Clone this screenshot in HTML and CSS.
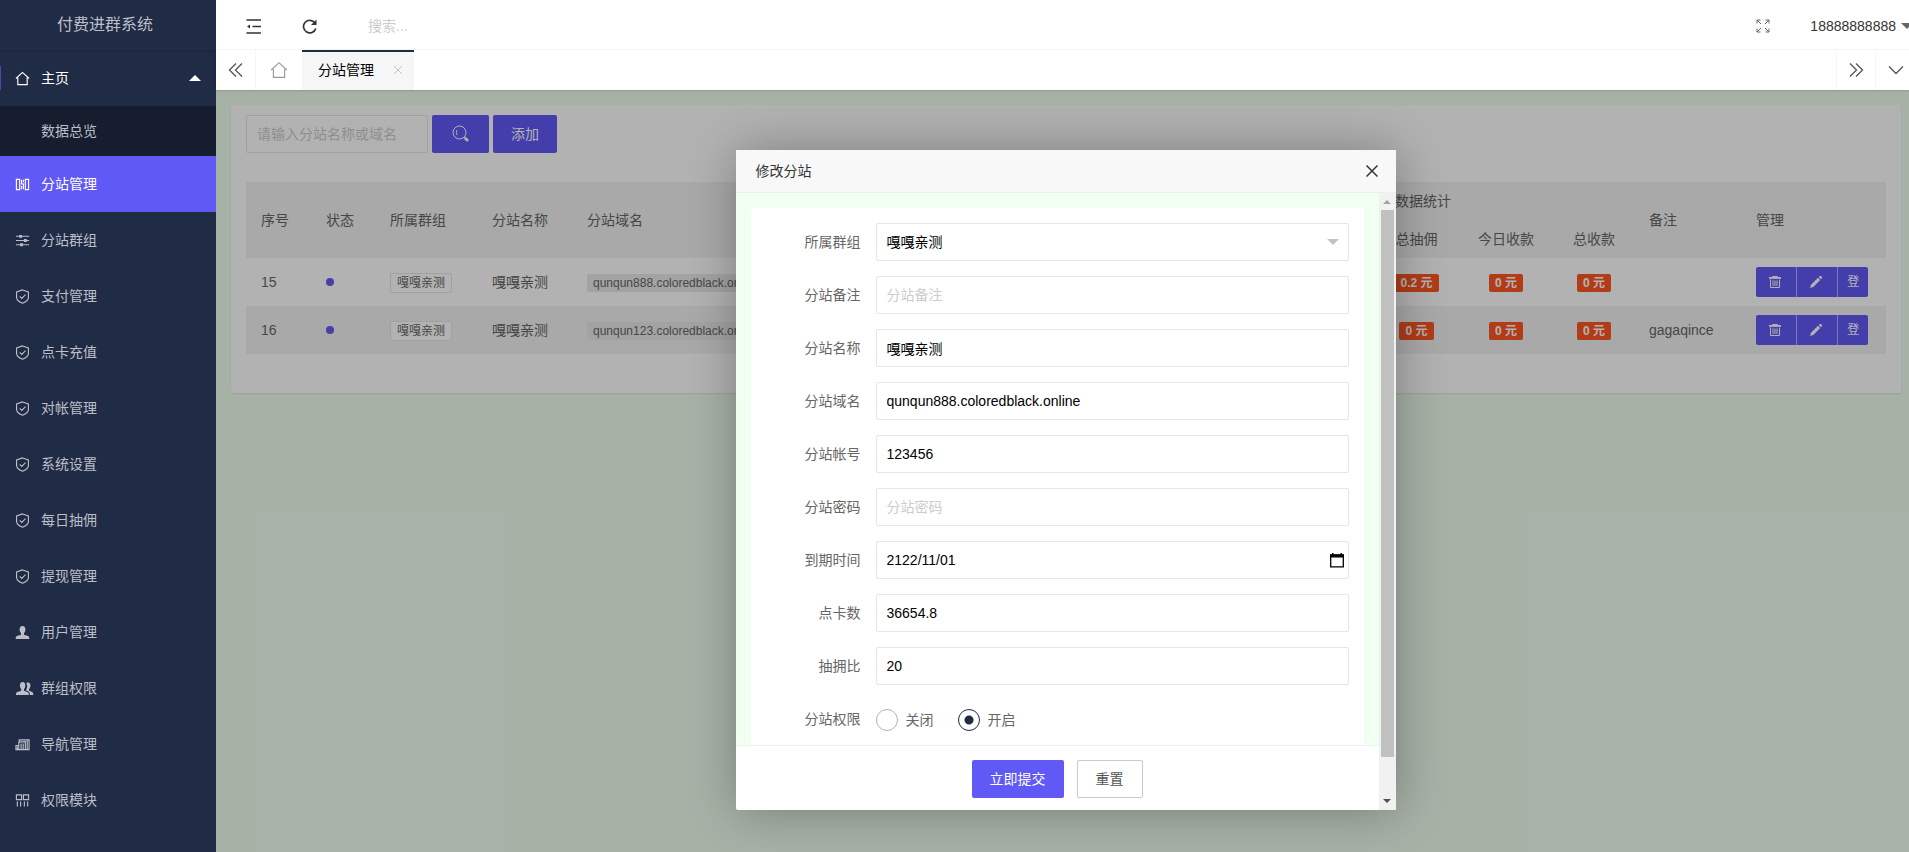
FILE: index.html
```html
<!DOCTYPE html>
<html lang="zh-CN">
<head>
<meta charset="utf-8">
<title>付费进群系统</title>
<link rel="stylesheet" href="styles.css">
</head>
<body>
<svg class="defs" aria-hidden="true">
  <symbol id="i-home" viewBox="0 0 16 16"><path d="M1 8 8 1.500 15 8M3 7v7.500h10V7" /></symbol>
  <symbol id="i-shield" viewBox="0 0 16 16"><path d="M8 1 14.300 3.200v6c0 2.600-3 4.500-6.300 6C4.700 13.700 1.700 11.800 1.700 9.200v-6zM5 7.800l2.300 2.200L11.200 6" /></symbol>
  <symbol id="i-trash" viewBox="0 0 14 14"><path d="M1 3h12M4.500 2.500v-1h5v1M2.500 4.500v8h9v-8M5 5.500V11M7 5.500V11M9 5.500V11" /><path class="solid" d="M1 2h12v1.700H1z" /></symbol>
  <symbol id="i-edit" viewBox="0 0 14 14"><path class="solid" d="M1 13l1-3.300L9 2.700 11.300 5 4.300 12zM9.800 2l1-.9q.6-.5 1.100 0l1 1q.5.6 0 1.100l-.9 1z" /></symbol>
</svg>
<div class="app">
  <aside class="side">
    <h1 class="logo">付费进群系统</h1>
    <nav>
      <a class="nav open" href="#"><svg class="icon"><use href="#i-home"/></svg><span>主页</span><i class="caret up"></i></a>
      <a class="nav sub" href="#">数据总览</a>
      <a class="nav active" href="#"><svg class="icon" viewBox="0 0 16 16"><path d="M1.500 2.500H5v11H1.500zM11 2.500h3.500v11H11zM7 3v4.500h2V13M7 9.500V13M9 3v2.500"/></svg><span>分站管理</span></a>
      <a class="nav" href="#"><svg class="icon" viewBox="0 0 16 16"><path d="M1 3.500h14M1 8h14M1 12.500h14"/><path d="M6 2v3M11 6.500v3M7 11v3" stroke-width="3"/></svg><span>分站群组</span></a>
      <a class="nav" href="#"><svg class="icon"><use href="#i-shield"/></svg><span>支付管理</span></a>
      <a class="nav" href="#"><svg class="icon"><use href="#i-shield"/></svg><span>点卡充值</span></a>
      <a class="nav" href="#"><svg class="icon"><use href="#i-shield"/></svg><span>对帐管理</span></a>
      <a class="nav" href="#"><svg class="icon"><use href="#i-shield"/></svg><span>系统设置</span></a>
      <a class="nav" href="#"><svg class="icon"><use href="#i-shield"/></svg><span>每日抽佣</span></a>
      <a class="nav" href="#"><svg class="icon"><use href="#i-shield"/></svg><span>提现管理</span></a>
      <a class="nav" href="#"><svg class="icon" viewBox="0 0 16 16"><path class="solid" d="M8 1c2 0 3.100 1.500 3.100 3.700 0 1.800-.8 3-1.500 3.800v2l4.300 1.300c.9.400 1.400 1.200 1.400 3.200H.7c0-2 .5-2.800 1.400-3.200l4.300-1.300v-2C5.700 7.700 4.900 6.500 4.900 4.700 4.900 2.500 6 1 8 1z"/></svg><span>用户管理</span></a>
      <a class="nav" href="#"><svg class="icon wide" viewBox="0 0 20 16"><path class="solid" d="M8 1c1.900 0 2.900 1.500 2.900 3.700 0 1.800-.8 3-1.400 3.800v2l3.700 1.300c.9.400 1.400 1.200 1.400 3.200H.9c0-2 .5-2.800 1.400-3.200l4.200-1.300v-2C5.800 7.700 5.100 6.500 5.100 4.700 5.100 2.500 6.100 1 8 1zM12 2c2.800-1.500 4.700.5 4.300 3.200-.2 1.500-.8 2.500-1.400 3.300v1.900l2.800 1.100c1.200.5 1.700 1.500 1.700 3.500h-3.700c0-2.500-.7-3.400-1.900-4l-2-1V9c1.200-1.700 1.500-4.300.2-7z"/></svg><span>群组权限</span></a>
      <a class="nav" href="#"><svg class="icon" viewBox="0 0 16 16"><path d="M4.500 5V3H15v10.500h-3.500M4 5.500 11 5v8.500H4zM4 9H1v4.500h3M2.500 10v3M6.500 7v6M8.700 7v6M13 3v10"/></svg><span>导航管理</span></a>
      <a class="nav" href="#"><svg class="icon" viewBox="0 0 16 16"><path d="M1.500 2H7v5H1.500zM9 2h5.500v5H9zM2.500 9v5.500M6 9v5.500M10 9v5.500M13.500 9v5.500"/></svg><span>权限模块</span></a>
    </nav>
  </aside>
  <div class="main">
    <header class="top">
      <button class="tool" aria-label="收起菜单"><svg class="ico16" viewBox="0 0 16 16"><path d="M.5 2H15M6.500 8.500H15M.5 15H15" stroke-width="1.500"/><path class="solid" d="M1 8.500 4 6.500v4z"/></svg></button>
      <button class="tool" aria-label="刷新"><svg class="ico16" viewBox="0 0 16 16"><path d="M13.800 10.500A6.300 6.300 0 1 1 13 5" stroke-width="1.700"/><path class="solid" d="M14.500 1.500V7H9z"/></svg></button>
      <input class="search" type="text" placeholder="搜索..." aria-label="搜索">
      <button class="tool full" aria-label="全屏"><svg class="ico14" viewBox="0 0 14 14"><path d="M1 4.500V1h3.500M1 1l4 4M9.500 1H13v3.500M13 1 9 5M1 9.500V13h3.500M1 13l4-4M9.500 13H13V9.500M13 13 9 9"/></svg></button>
      <a class="user" href="#">18888888888<i class="caret down"></i></a>
    </header>
    <div class="tabs">
      <button class="tab-ctl" aria-label="向左"><svg class="ico16" viewBox="0 0 16 16"><path d="M8 1.500 1.500 8 8 14.500M14 1.500 7.500 8l6.500 6.500"/></svg></button>
      <a class="tab-home" href="#" aria-label="主页"><svg class="ico18"><use href="#i-home"/></svg></a>
      <a class="tab" href="#">分站管理<svg class="ico10" viewBox="0 0 10 10"><path d="m1 1 8 8M9 1 1 9"/></svg></a>
      <button class="tab-ctl right" aria-label="向右"><svg class="ico16" viewBox="0 0 16 16"><path d="M2 1.500 8.500 8 2 14.500M8 1.500 14.500 8 8 14.500"/></svg></button>
      <button class="tab-ctl menu" aria-label="更多"><svg class="ico16" viewBox="0 0 16 16"><path d="m1 4.500 7 7 7-7"/></svg></button>
    </div>
    <main class="page">
      <section class="card">
        <form class="filter">
          <input class="field" type="text" placeholder="请输入分站名称或域名" aria-label="分站名称或域名">
          <button class="btn find" type="button" aria-label="查询"><svg class="ico18" viewBox="0 0 18 18"><circle cx="7.500" cy="7.500" r="6.500"/><path d="M5 5Q3.500 7.500 5 10"/><path d="m12.500 12.500 3.500 3.500" stroke-width="2.500"/></svg></button>
          <button class="btn" type="button">添加</button>
        </form>
        <table class="list">
          <colgroup><col class="w65"><col class="w64"><col class="w102"><col class="w95"><col><col class="w163"><col class="w83"><col class="w96"><col class="w80"><col class="w107"><col class="w145"></colgroup>
          <thead>
            <tr><th rowspan="2">序号</th><th rowspan="2">状态</th><th rowspan="2">所属群组</th><th rowspan="2">分站名称</th><th rowspan="2">分站域名</th><th class="mid" colspan="4">数据统计</th><th rowspan="2">备注</th><th rowspan="2">管理</th></tr>
            <tr><th></th><th class="mid">总抽佣</th><th class="mid">今日收款</th><th class="mid">总收款</th></tr>
          </thead>
          <tbody>
            <tr><td>15</td><td><i class="dot"></i></td><td><span class="tag rim">嘎嘎亲测</span></td><td>嘎嘎亲测</td><td><span class="tag gray">qunqun888.coloredblack.online</span></td><td></td><td class="mid"><span class="tag red">0.2 元</span></td><td class="mid"><span class="tag red">0 元</span></td><td class="mid"><span class="tag red">0 元</span></td><td></td>
              <td><div class="acts"><button aria-label="删除"><svg class="ico14"><use href="#i-trash"/></svg></button><button aria-label="编辑"><svg class="ico14"><use href="#i-edit"/></svg></button><button>登</button></div></td></tr>
            <tr><td>16</td><td><i class="dot"></i></td><td><span class="tag rim">嘎嘎亲测</span></td><td>嘎嘎亲测</td><td><span class="tag gray">qunqun123.coloredblack.online</span></td><td></td><td class="mid"><span class="tag red">0 元</span></td><td class="mid"><span class="tag red">0 元</span></td><td class="mid"><span class="tag red">0 元</span></td><td>gagaqince</td>
              <td><div class="acts"><button aria-label="删除"><svg class="ico14"><use href="#i-trash"/></svg></button><button aria-label="编辑"><svg class="ico14"><use href="#i-edit"/></svg></button><button>登</button></div></td></tr>
          </tbody>
        </table>
      </section>
      <div class="shade">
        <div class="dialog" role="dialog" aria-labelledby="dlg-title">
          <div class="dlg-head"><h2 id="dlg-title">修改分站</h2><button aria-label="关闭窗口"><svg class="ico12" viewBox="0 0 12 12"><path d="m.5.5 11 11M11.500.5l-11 11"/></svg></button></div>
          <div class="dlg-body">
            <form class="dlg-main">
              <div class="scroll">
                <div class="form">
                  <div class="row"><label for="f1">所属群组</label><div class="pick"><select id="f1" class="field"><option>嘎嘎亲测</option></select></div></div>
                  <div class="row"><label for="f2">分站备注</label><input id="f2" class="field" type="text" placeholder="分站备注"></div>
                  <div class="row"><label for="f3">分站名称</label><input id="f3" class="field" type="text" value="嘎嘎亲测"></div>
                  <div class="row"><label for="f4">分站域名</label><input id="f4" class="field" type="text" value="qunqun888.coloredblack.online"></div>
                  <div class="row"><label for="f5">分站帐号</label><input id="f5" class="field" type="text" value="123456"></div>
                  <div class="row"><label for="f6">分站密码</label><input id="f6" class="field" type="password" placeholder="分站密码"></div>
                  <div class="row"><label for="f7">到期时间</label><div class="date"><input id="f7" class="field" type="text" value="2122/11/01"><svg class="ico16" viewBox="0 0 16 16"><path d="M1.700 3h12.600v11.800H1.700z" stroke-width="1.300"/><path class="solid" d="M1 2.500h14v3H1zM3 1h1.500v2H3zM11.500 1H13v2h-1.500z"/></svg></div></div>
                  <div class="row"><label for="f8">点卡数</label><input id="f8" class="field" type="text" value="36654.8"></div>
                  <div class="row"><label for="f9">抽拥比</label><input id="f9" class="field" type="text" value="20"></div>
                  <div class="row"><span class="cap">分站权限</span><div class="radios"><label><input type="radio" name="auth">关闭</label><label><input type="radio" name="auth" checked>开启</label></div></div>
                </div>
              </div>
              <div class="dlg-foot"><button class="btn" type="button">立即提交</button><button class="btn plain" type="reset">重置</button></div>
            </form>
            <div class="bar" aria-hidden="true"><i class="arrow top-arrow"></i><div class="thumb"></div><i class="arrow end-arrow"></i></div>
          </div>
        </div>
      </div>
    </main>
  </div>
</div>
</body>
</html>
```
FILE: styles.css
```css
* { box-sizing: border-box; }
body { margin: 0; overflow: hidden; font: 14px/24px "Liberation Sans", "Noto Sans CJK SC", sans-serif; color: #666; }
a { color: inherit; text-decoration: none; }
button, input, select { font: inherit; margin: 0; }
button { border: 0; background: none; padding: 0; color: inherit; cursor: pointer; }
svg { fill: none; stroke: currentColor; stroke-width: 1; flex: none; display: block; }
.defs { position: absolute; width: 0; height: 0; }
.solid { fill: currentColor; stroke: none; }
.ico10 { width: 10px; height: 10px; }
.ico12 { width: 12px; height: 12px; }
.ico14 { width: 14px; height: 14px; }
.ico16 { width: 16px; height: 16px; }
.ico18 { width: 18px; height: 18px; }

.app { display: flex; height: 100vh; }
.side { flex: none; width: 216px; background: #202b46; color: #bcbfc7; overflow: hidden; }
.logo { margin: 0; height: 50px; line-height: 50px; padding-right: 6px; font-size: 16px; font-weight: 400; text-align: center; box-shadow: 0 1px 2px rgba(0, 0, 0, .15); }
.nav { display: flex; align-items: center; height: 56px; padding: 0 15px; }
.nav .icon { width: 15px; height: 15px; margin-right: 11px; stroke-width: 1.2; }
.nav .icon.wide { width: 19px; margin-right: 7px; }
.nav.open { color: #fff; background: linear-gradient(#4b48ab, #4b48ab) 0 center / 1px 24px no-repeat; }
.nav.open .caret { margin-left: auto; }
.nav.sub { height: 50px; padding-left: 41px; background: #161d2f; }
.nav.active { background: #6059f6; color: #fff; }
.caret { flex: none; border: 6px solid transparent; }
.caret.up { border-top: 0; border-bottom-color: #fff; }
.caret.down { border-bottom: 0; border-top-color: #666; }

.main { flex: 1; min-width: 0; display: flex; flex-direction: column; }
.top { display: flex; align-items: center; height: 50px; border-bottom: 1px solid #f6f6f6; color: #333; padding: 2px 0 0 30px; overflow: hidden; }
.tool { width: 16px; height: 16px; margin-right: 40px; }
.search { flex: 1; border: 0; outline: 0; padding: 0 10px; min-width: 0; }
.search::placeholder { color: #ccc; opacity: 1; }
.tool.full { width: 14px; height: 14px; color: #666; }
.user { display: flex; align-items: center; gap: 5px; margin-right: -4px; }
.tabs { position: relative; z-index: 1; display: flex; height: 40px; background: #fff; color: #555; box-shadow: 0 1px 2px rgba(0, 0, 0, .15); }
.tab-ctl { display: grid; place-items: center; width: 40px; border-right: 1px solid #f6f6f6; }
.tab-ctl svg { stroke-width: 1.3; }
.tab-ctl.right { margin-left: auto; border-left: 1px solid #f6f6f6; }
.tab-ctl.menu { width: 33px; padding-left: 6px; border: 0; }
.tab-home { display: grid; place-items: center; width: 46px; color: #999; }
.tab { display: flex; align-items: center; justify-content: space-between; width: 112px; padding: 0 11px 2px 16px; border-top: 2px solid #202b46; background: #f6f6f6; color: #000; }
.tab svg { color: #c2c2c2; }

.page { position: relative; flex: 1; min-height: 0; padding: 15px 8px 15px 15px; background: #f0fff0; }
.card { padding: 10px 15px 39px; border-radius: 2px; background: #fff; box-shadow: 0 1px 2px rgba(0, 0, 0, .1); }
.filter { display: flex; gap: 4px; margin-bottom: 29px; }
.field { display: block; width: 100%; height: 38px; padding: 0 10px; border: 1px solid #e6e6e6; border-radius: 2px; background: #fff; color: #000; outline: 0; }
.filter .field { width: 182px; }
.field::placeholder { color: #ccc; opacity: 1; }
.btn { display: inline-flex; align-items: center; justify-content: center; height: 38px; padding: 0 18px; border-radius: 2px; background: #6059f6; color: #fff; }
.find { width: 57px; }
.btn.plain { border: 1px solid #c9c9c9; background: #fff; color: #555; }

.list { width: 100%; table-layout: fixed; border-collapse: collapse; }
.w65 { width: 65px; } .w64 { width: 64px; } .w102 { width: 102px; } .w95 { width: 95px; } .w163 { width: 163px; }
.w83 { width: 83px; } .w96 { width: 96px; } .w80 { width: 80px; } .w107 { width: 107px; } .w145 { width: 145px; }
.list th, .list td { padding: 0 15px; text-align: left; font-weight: 400; white-space: nowrap; }
.list .mid { padding: 0; text-align: center; }
.list th { height: 38px; }
.list td { height: 48px; }
.list thead, .list tbody tr:nth-child(even) { background: #f2f2f2; }
.dot { display: block; width: 8px; height: 8px; border-radius: 50%; background: #6059f6; }
.tag { display: inline-block; height: 18px; line-height: 18px; padding: 0 6px; border-radius: 2px; font-size: 12px; vertical-align: middle; }
.rim { height: 20px; border: 1px solid #e6e6e6; background: #fff; }
.gray { background: #eaeaea; }
.red { background: #ff5722; color: #fff; font-weight: 700; }
.acts { display: flex; width: 112px; color: #fff; }
.acts button { display: grid; place-items: center; flex: 40; height: 30px; padding-right: 3px; background: #6059f6; font-size: 12px; border-right: 1px solid #b7b4fa; }
.acts button:first-child { border-radius: 2px 0 0 2px; }
.acts button:last-child { flex: 32; padding: 0; border: 0; border-radius: 0 2px 2px 0; }

.shade { position: absolute; inset: 0; padding: 60px 0 0 6px; background: rgba(0, 0, 0, .3); overflow: hidden; }
.dialog { display: flex; flex-direction: column; width: 660px; height: 660px; margin: 0 auto; border-radius: 2px; background: #fff; box-shadow: 1px 1px 50px rgba(0, 0, 0, .3); }
.dlg-head { display: flex; align-items: center; justify-content: space-between; height: 43px; padding: 0 18px 0 20px; border-bottom: 1px solid #eee; background: #f8f8f8; color: #333; }
.dlg-head h2 { margin: 0; font-size: 14px; font-weight: 400; }
.dlg-head svg { stroke-width: 1.5; }
.dlg-body { flex: 1; min-height: 0; display: flex; }
.dlg-main { flex: 1; display: flex; flex-direction: column; min-height: 0; }
.scroll { flex: 1; min-height: 0; overflow: hidden; padding: 15px 15px 0; background: #f0fff0; }
.form { display: grid; gap: 15px; min-height: 640px; align-content: start; padding: 15px; border-radius: 2px 2px 0 0; background: #fff; }
.row { display: grid; grid-template-columns: 95px 1fr; gap: 15px; align-items: center; height: 38px; }
.row > label, .cap { text-align: right; }
.pick, .date { position: relative; }
.pick select { appearance: none; }
.pick::after { content: ""; position: absolute; right: 10px; top: 16px; border: 6px solid transparent; border-top-color: #c2c2c2; border-bottom: 0; }
.date svg { position: absolute; right: 4px; top: 11px; color: #000; }
.radios { display: flex; gap: 24px; padding-top: 2px; }
.radios label { display: flex; align-items: center; gap: 8px; }
.radios input { appearance: none; width: 22px; height: 22px; border: 1px solid #b2b2b2; border-radius: 50%; }
.radios input:checked { border-color: #202b46; background: radial-gradient(circle, #202b46 4px, transparent 5px); }
.dlg-foot { display: flex; justify-content: center; gap: 13px; height: 65px; padding: 14px 0 0; border-top: 1px solid #f0f0f0; }
.bar { display: flex; flex-direction: column; align-items: center; width: 17px; background: #f1f1f1; }
.thumb { width: 13px; height: 547px; background: #c1c1c1; }
.arrow { border: 4px solid transparent; }
.top-arrow { border-top: 0; border-bottom-color: #a3a3a3; margin: 7px 0 6px; }
.end-arrow { border-bottom: 0; border-top-color: #505050; margin: auto 0 7px; }
```
